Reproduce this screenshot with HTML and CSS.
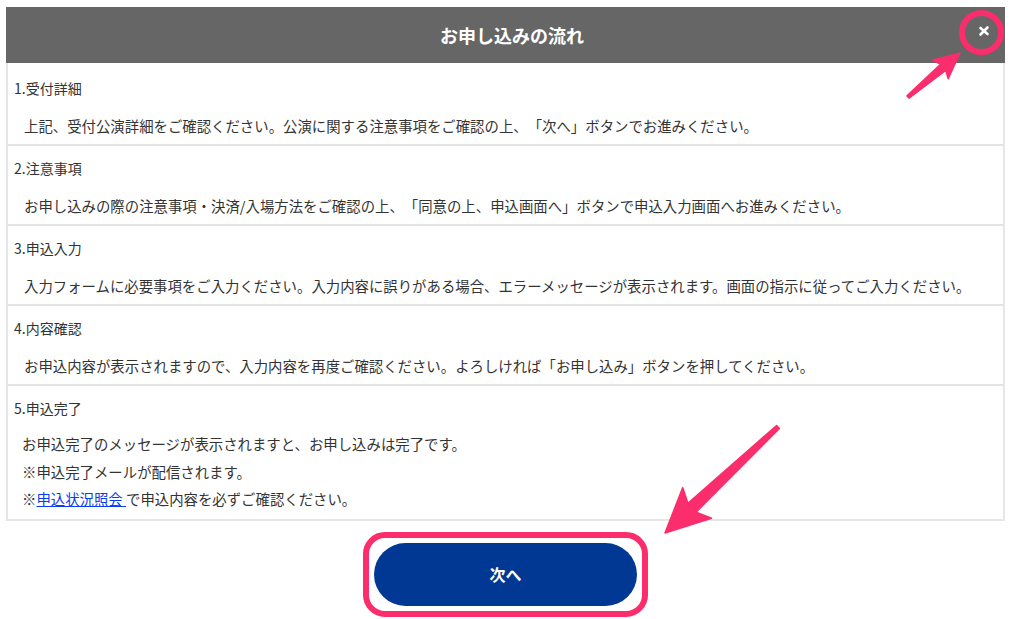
FILE: index.html
```html
<!DOCTYPE html>
<html lang="ja">
<head>
    <meta charset="UTF-8">
    <meta name="viewport" content="width=device-width, initial-scale=1.0">
    <title>お申し込みの流れ</title>
    <link rel="stylesheet" href="styles.css">
</head>
<body>
    <div class="page">
        <div class="flow">
            <div class="flow-head">
                <h1>お申し込みの流れ</h1>
                <span class="close-mark">
                    <svg width="12" height="12" viewBox="0 0 12 12"><path d="M2.5 3 L9.5 9 M9.5 2.5 L2.5 9.5" stroke="#fff" stroke-width="2.6" stroke-linecap="round"/></svg>
                </span>
            </div>
            <div class="steps">
                <div class="step">
                    <div class="step-title">1.受付詳細</div>
                    <p class="step-text">上記、受付公演詳細をご確認ください。公演に関する注意事項をご確認の上、「次へ」ボタンでお進みください。</p>
                </div>
                <div class="step">
                    <div class="step-title">2.注意事項</div>
                    <p class="step-text">お申し込みの際の注意事項・決済/入場方法をご確認の上、「同意の上、申込画面へ」ボタンで申込入力画面へお進みください。</p>
                </div>
                <div class="step">
                    <div class="step-title">3.申込入力</div>
                    <p class="step-text">入力フォームに必要事項をご入力ください。入力内容に誤りがある場合、エラーメッセージが表示されます。画面の指示に従ってご入力ください。</p>
                </div>
                <div class="step">
                    <div class="step-title">4.内容確認</div>
                    <p class="step-text">お申込内容が表示されますので、入力内容を再度ご確認ください。よろしければ「お申し込み」ボタンを押してください。</p>
                </div>
                <div class="step step-last">
                    <div class="step-title">5.申込完了</div>
                    <p class="step-text">お申込完了のメッセージが表示されますと、お申し込みは完了です。<br>
                    ※申込完了メールが配信されます。<br>
                    ※<a href="#">申込状況照会 </a>で申込内容を必ずご確認ください。</p>
                </div>
            </div>
        </div>

        <div class="next-row">
            <span class="mark-box">
                <button class="next-button">次へ</button>
            </span>
        </div>

        <!-- annotation arrows -->
        <svg class="arrows" width="1024" height="619" viewBox="0 0 1024 619">
            <polygon points="907,95.9 940.5,64.2 932.6,60.3 960,53 948.2,78.7 945.7,70.4 909,98.1" fill="#fb2d6c" stroke="#fb2d6c" stroke-width="1.5" stroke-linejoin="round"/>
            <polygon points="776.6,425.5 687.9,503.3 682.7,487.6 665,533 711.5,518.2 696.1,512.1 779.4,428.5" fill="#fb2d6c" stroke="#fb2d6c" stroke-width="1.5" stroke-linejoin="round"/>
        </svg>
    </div>
</body>
</html>
```

FILE: styles.css
```css
body {
    margin: 0;
    background-color: #fff;
    color: #333;
    font-family: "Noto Sans CJK JP", "Noto Sans", sans-serif;
    text-spacing-trim: space-all;
}
.page {
    position: relative;
    width: 1024px;
    height: 619px;
    padding: 7px 0 0 6px;
    box-sizing: border-box;
    overflow: hidden;
}
.flow {
    width: 999px;
}
.flow-head {
    position: relative;
    height: 56px;
    background-color: #666;
    display: flex;
    align-items: center;
    justify-content: center;
}
.flow-head h1 {
    margin: 0;
    padding-left: 13px;
    color: #fff;
    font-size: 18px;
    font-weight: bold;
    line-height: 1;
}
.close-mark {
    position: absolute;
    right: 1px;
    top: 3px;
    width: 33px;
    height: 33px;
    border: 6px solid #fb2d6c;
    border-radius: 50%;
    display: flex;
    align-items: center;
    justify-content: center;
}
.close-mark svg {
    margin: -4px 0 0 4px;
}
.steps {
    border: 2px solid #e6e6e6;
    border-top: none;
    padding-top: 3px;
}
.step {
    padding: 8px 0 4px;
    border-bottom: 2px solid #e3e3e3;
}
.step-title {
    padding-left: 6px;
    font-size: 14px;
    line-height: 28px;
}
.step-text {
    margin: 10px 0 0;
    padding-left: 16px;
    font-size: 14.4px;
    line-height: 28px;
}
.step-last {
    border-bottom: none;
    padding-bottom: 6px;
}
.step-last .step-text {
    margin-top: 8px;
    padding-left: 14px;
    line-height: 27.5px;
}
.step-text a {
    color: #0b3cf5;
    text-decoration: underline;
}
.next-row {
    width: 999px;
    margin-top: 11px;
    display: flex;
    justify-content: center;
}
.mark-box {
    display: block;
    padding: 5px;
    border: 6px solid #fb2d6c;
    border-radius: 22px;
}
.next-button {
    display: block;
    width: 263px;
    height: 63px;
    border: none;
    border-radius: 32px;
    background-color: #003893;
    color: #fff;
    font-family: "Noto Sans CJK JP", sans-serif;
    font-size: 16px;
    font-weight: bold;
    cursor: pointer;
}
.arrows {
    position: absolute;
    left: 0;
    top: 0;
    pointer-events: none;
}
```
